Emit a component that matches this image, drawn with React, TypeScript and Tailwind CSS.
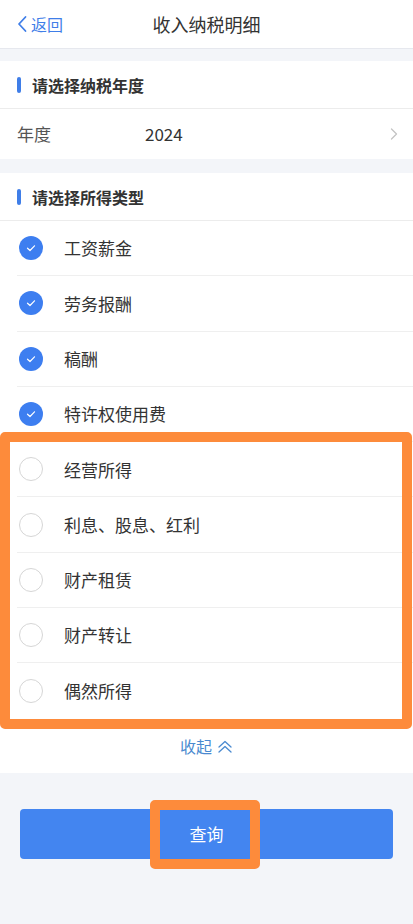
const checked = ["工资薪金", "劳务报酬", "稿酬", "特许权使用费"];
const unchecked = ["经营所得", "利息、股息、红利", "财产租赁", "财产转让", "偶然所得"];

function SectionTitle({ text }: { text: string }) {
  return (
    <div className="flex h-[48px] items-center border-b border-[#ececec] pl-[17px]">
      <span className="h-[16px] w-[4px] rounded-full bg-[#3f7ee8]" />
      <span className="ml-[11px] text-[16px] font-bold text-[#333]">{text}</span>
    </div>
  );
}

function Row({ label, on, last }: { label: string; on: boolean; last?: boolean }) {
  return (
    <div className="ml-[17px] flex h-[55.3px] items-center border-b border-[#efefef]" style={last ? { borderBottom: "none" } : undefined}>
      {on ? (
        <span className="ml-[2px] flex h-[24px] w-[24px] items-center justify-center rounded-full bg-[#3d7ef0]">
          <svg width="12" height="12" viewBox="0 0 12 12" fill="none">
            <path d="M2.5 6.2 L5 8.5 L9.5 3.8" stroke="#fff" strokeWidth="1.2" strokeLinecap="round" strokeLinejoin="round" />
          </svg>
        </span>
      ) : (
        <span className="ml-[2px] h-[24px] w-[24px] rounded-full border border-[#d6d6d6] bg-white" />
      )}
      <span className="ml-[21px] text-[17px] text-[#333]">{label}</span>
    </div>
  );
}

export default function App() {
  return (
    <main className="relative min-h-[924px] w-[413px] bg-[#f3f5f9] font-['Noto_Sans_CJK_SC','Noto_Sans',sans-serif]">
      <header className="relative flex h-[49px] items-center justify-center border-b border-[#e6e8ee] bg-white">
        <div className="absolute left-[16px] top-0 flex h-full items-center text-[#3f7ee8]">
          <svg width="12" height="18" viewBox="0 0 12 18" fill="none">
            <path d="M9.5 2 L3 9 L9.5 16" stroke="#3f7ee8" strokeWidth="1.8" strokeLinecap="round" strokeLinejoin="round" />
          </svg>
          <span className="ml-[3px] text-[16px]">返回</span>
        </div>
        <h1 className="text-[18px] text-[#333]">收入纳税明细</h1>
      </header>

      <section className="mt-[12px] bg-white">
        <SectionTitle text="请选择纳税年度" />
        <div className="flex h-[50px] items-center pl-[17px] pr-[15px]">
          <span className="w-[128px] text-[17px] text-[#555]">年度</span>
          <span className="flex-1 text-[17px] text-[#333]">2024</span>
          <svg width="8" height="14" viewBox="0 0 8 14" fill="none">
            <path d="M1.5 2 L6.5 7 L1.5 12" stroke="#c4c4c4" strokeWidth="1.3" strokeLinecap="round" strokeLinejoin="round" />
          </svg>
        </div>
      </section>

      <section className="relative mt-[14px] bg-white">
        <SectionTitle text="请选择所得类型" />
        {checked.map((l) => (
          <Row key={l} label={l} on />
        ))}
        <div className="relative">
          {unchecked.map((l, i) => (
            <Row key={l} label={l} on={false} last={i === unchecked.length - 1} />
          ))}
          <div className="pointer-events-none absolute left-0 right-[1px] top-[-10px] bottom-[-10px] rounded-[5px] border-[10px] border-[#fd8b3b]" />
        </div>
        <div className="flex h-[54px] items-center justify-center text-[16px] text-[#4a8ad0]">
          <span>收起</span>
          <svg className="ml-[5px]" width="16" height="14" viewBox="0 0 16 14" fill="none">
            <path d="M2 8 L8 2.5 L14 8" stroke="#4a8ad0" strokeWidth="1.3" strokeLinecap="round" strokeLinejoin="round" />
            <path d="M2 13 L8 7.5 L14 13" stroke="#4a8ad0" strokeWidth="1.3" strokeLinecap="round" strokeLinejoin="round" />
          </svg>
        </div>
      </section>

      <div className="px-[20px] pt-[36px]">
        <div className="relative flex h-[50px] items-center justify-center rounded-[4px] bg-[#4385f0]">
          <span className="text-[17px] text-white">查询</span>
          <div className="pointer-events-none absolute left-[130px] top-[-9px] h-[69px] w-[110px] rounded-[5px] border-[10px] border-[#fd8b3b]" />
        </div>
      </div>
    </main>
  );
}
